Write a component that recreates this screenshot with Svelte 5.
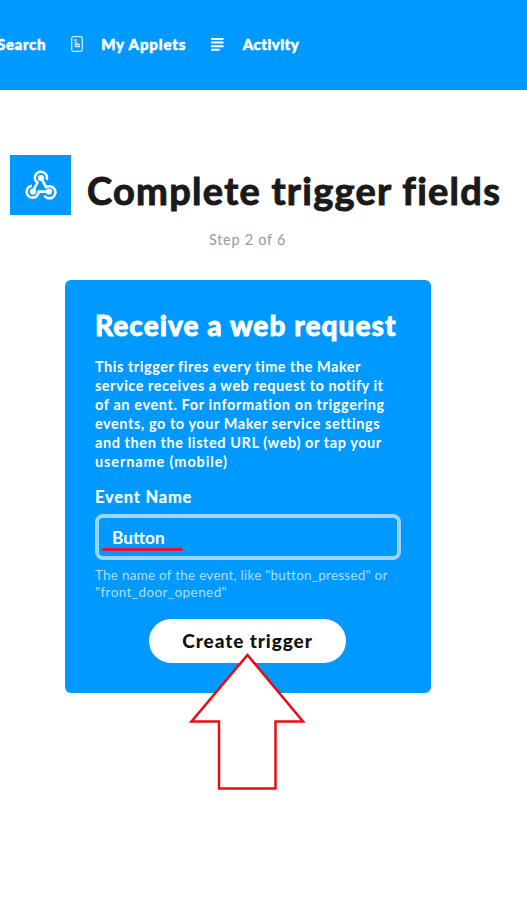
<script>
  const paragraph = [
    ['This trigger fires every time the Maker', 0.52],
    ['service receives a web request to notify it', 0.5],
    ['of an event. For information on triggering', 0.6],
    ['events, go to your Maker service settings', 0.55],
    ['and then the listed URL (web) or tap your', 0.58],
    ['username (mobile)', 0.88],
  ];
  const hint = [
    ['The name of the event, like "button_pressed" or', 0.24],
    ['"front_door_opened"', 0.42],
  ];
</script>

<div class="page">
  <header>
    <span class="search">Search</span>
    <svg class="doc" width="12" height="16" viewBox="0 0 12 16" fill="none" stroke="#fff">
      <rect x=".7" y=".7" width="10.6" height="14.6" rx="1.5" stroke-width="1.3" opacity=".8" />
      <path d="M2.8 4h3M3.5 6.5h3M3.5 8.5h5.5M3.5 10.5h5.5" stroke-width="1.3" opacity=".8" />
    </svg>
    <span class="applets">My Applets</span>
    <svg class="lines" width="13" height="13" viewBox="0 0 13 13" fill="#fff">
      <path d="M0 0h12.5v2H0zM0 3.6h12.5v2H0zM0 7.2h12.5v2H0zM0 10.8h8.5v2H0z" />
    </svg>
    <span class="activity">Activity</span>
  </header>

  <div class="title">
    <div class="logo">
      <svg width="32" height="30" viewBox="0 0 32 30" fill="none" stroke="#fff" stroke-width="2.6">
        <path d="M21.6 9.8A6 6 0 1 0 12.4 12.6L8.6 20" />
        <path d="M7 15.7A6 6 0 1 0 13.6 21.6H24" />
        <path d="M16 8l5.2 9.2A6 6 0 1 1 19.4 25.6" />
        <g fill="#fff" stroke="none"><circle cx="16" cy="8" r="3.1" /><circle cx="8" cy="21.6" r="3.1" /><circle cx="24" cy="21.6" r="3.1" /></g>
      </svg>
    </div>
    <h1>Complete trigger fields</h1>
  </div>
  <p class="step">Step 2 of 6</p>

  <section class="card">
    <h2>Receive a web request</h2>
    <p class="description">
      {#each paragraph as [text, spacing]}
        <span style:letter-spacing="{spacing}px">{text}</span>
      {/each}
    </p>
    <div class="label">Event Name</div>
    <div class="field"><span>Button</span><i></i></div>
    <p class="hint">
      {#each hint as [text, spacing]}
        <span style:letter-spacing="{spacing}px">{text}</span>
      {/each}
    </p>
    <button>Create trigger</button>
    <svg class="arrow" width="118" height="140" viewBox="0 0 118 140">
      <path d="M58.5 3L114 69.5H86.5V136.5H30V69.5H2.5Z" fill="#fff" stroke="#e60d14" stroke-width="2.5" />
    </svg>
  </section>
</div>

<style>
  :global(body) { margin: 0; background: #fff; }
  .page { width: 527px; height: 900px; overflow: hidden; background: #fff; font-family: Lato, "Open Sans", sans-serif; }
  header { height: 90px; background: #0099ff; color: #fff; display: flex; align-items: center; box-sizing: border-box; font-size: 15px; font-weight: 900; white-space: nowrap; -webkit-text-stroke: .5px #fff; }
  header span { line-height: 88px; height: 90px; }
  header svg { flex: none; position: relative; top: -1px; }
  .search { margin-left: -3px; letter-spacing: .65px; }
  .doc { margin-left: 25px; }
  .applets { margin-left: 18px; letter-spacing: .87px; }
  .lines { margin-left: 25px; }
  .activity { margin-left: 18.5px; letter-spacing: .45px; }
  .title { display: flex; margin-top: 65px; padding-left: 10px; height: 60px; }
  .logo { width: 61px; height: 60px; background: #0099ff; display: flex; align-items: center; justify-content: center; flex: none; }
  h1 { margin: 11px 0 0 16px; font-size: 38px; line-height: 48px; font-weight: 700; letter-spacing: 1.27px; color: #1a1a1a; white-space: nowrap; -webkit-text-stroke: 1px #1a1a1a; }
  .step { margin: 15px 0 0; padding-left: 209px; font-size: 14.5px; line-height: 20px; letter-spacing: .7px; color: #999; }
  .card { position: relative; width: 366px; height: 413px; margin: 30px 0 0 65px; padding: 30px; box-sizing: border-box; border-radius: 6px; background: #0099ff; color: #fff; white-space: nowrap; }
  h2 { margin: 0; font-size: 28px; line-height: 31px; font-weight: 900; letter-spacing: 1.05px; -webkit-text-stroke: .8px #fff; }
  .description { margin: 16px 0 0; font-size: 14.5px; font-weight: 700; line-height: 19.1px; }
  .description span, .hint span { display: block; width: max-content; }
  .label { margin-top: 14.4px; font-size: 16.5px; line-height: 22px; font-weight: 700; letter-spacing: .78px; -webkit-text-stroke: .2px #fff; }
  .field { position: relative; margin-top: 6px; width: 306px; height: 46px; box-sizing: border-box; border: 4px solid #99d6ff; border-radius: 8px; padding-left: 13px; font-size: 17.3px; line-height: 39px; font-weight: 700; }
  .field i { position: absolute; left: 3px; top: 30px; width: 81px; height: 3px; background: #e3143c; border-radius: 2px; }
  .hint { margin: 7px 0 0; font-size: 13.5px; line-height: 17px; color: #b0dfff; }
  button { display: block; margin: 18px 0 0 54px; width: 197px; height: 44px; border: 0; border-radius: 22px; padding: 0; background: #fff; color: #111; font: 900 19px/44px Lato, sans-serif; letter-spacing: .92px; }
  .arrow { position: absolute; left: 124px; top: 372px; }
</style>
